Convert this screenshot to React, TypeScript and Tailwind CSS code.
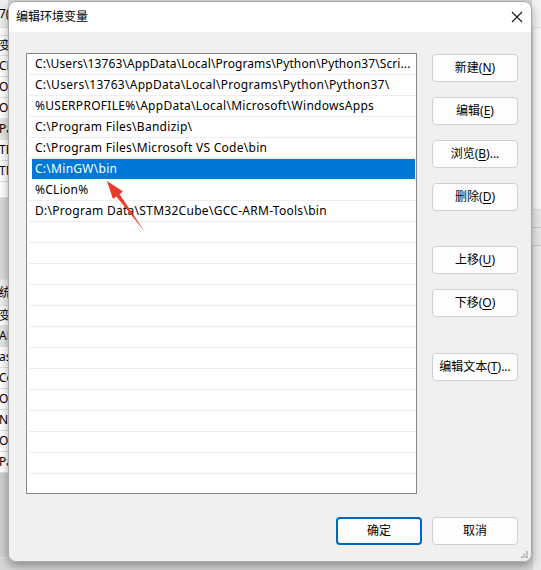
import React from 'react';

const paths = [
  'C:\\Users\\13763\\AppData\\Local\\Programs\\Python\\Python37\\Scri...',
  'C:\\Users\\13763\\AppData\\Local\\Programs\\Python\\Python37\\',
  '%USERPROFILE%\\AppData\\Local\\Microsoft\\WindowsApps',
  'C:\\Program Files\\Bandizip\\',
  'C:\\Program Files\\Microsoft VS Code\\bin',
  'C:\\MinGW\\bin',
  '%CLion%',
  'D:\\Program Data\\STM32Cube\\GCC-ARM-Tools\\bin',
];

const SELECTED = 5;
const EMPTY_ROWS = 13;

const uiFont = 'font-["Segoe_UI","Noto_Sans","Noto_Sans_CJK_SC",sans-serif]';

const leftBits = [
  { h: 28, t: '7(', bg: 'bg-[#eeeeee]' },
  { h: 8, t: '', bg: 'bg-white' },
  { h: 20, t: '变', bg: 'bg-white' },
  { h: 21, t: 'CL', bg: 'bg-white' },
  { h: 21, t: 'O', bg: 'bg-white' },
  { h: 21, t: 'O', bg: 'bg-white' },
  { h: 21, t: 'Pa', bg: 'bg-[#e5e5e5]' },
  { h: 21, t: 'TE', bg: 'bg-white' },
  { h: 21, t: 'TM', bg: 'bg-white' },
  { h: 16, t: '', bg: 'bg-white' },
  { h: 82, t: '', bg: 'bg-[#d9d9d9]' },
  { h: 26, t: '统', bg: 'bg-[#efefef]' },
  { h: 20, t: '变', bg: 'bg-white' },
  { h: 21, t: 'AD', bg: 'bg-[#e5e5e5]' },
  { h: 21, t: 'as', bg: 'bg-white' },
  { h: 21, t: 'Co', bg: 'bg-white' },
  { h: 21, t: 'Or', bg: 'bg-white' },
  { h: 21, t: 'N', bg: 'bg-white' },
  { h: 21, t: 'O', bg: 'bg-white' },
  { h: 21, t: 'Pa', bg: 'bg-white' },
  { h: 85, t: '', bg: 'bg-[#cfcfcf]' },
];

function Btn({ label, k, suffix = '' }: { label: string; k: string; suffix?: string }) {
  return (
    <div className="w-[86px] h-[28px] flex items-center justify-center rounded-[4px] bg-[#fdfdfd] border border-[#d0d0d0] text-[12px] text-black">
      {label}(<u className="underline-offset-2">{k}</u>){suffix}
    </div>
  );
}

function Arrow() {
  return (
    <svg className="absolute left-0 top-0 z-20 pointer-events-none" width="541" height="570" viewBox="0 0 541 570">
      <polygon
        points="107,181 113,199 116.4,196.6 145,232 119.6,194.2 123,191.5"
        fill="#ec3a2d"
      />
    </svg>
  );
}

export default function App() {
  return (
    <div className={`relative w-[541px] h-[570px] overflow-hidden bg-[#d6d6d6] flex ${uiFont}`}>
      {/* background window on the left */}
      <div className="w-[8px] flex flex-col overflow-hidden text-[12px] leading-none text-black">
        {leftBits.map((b, i) => (
          <div key={i} style={{ height: b.h }} className={`${b.bg} flex items-center whitespace-nowrap border-b border-[#e2e2e2]`}>
            <span className="-ml-[1px]">{b.t}</span>
          </div>
        ))}
      </div>

      {/* dialog */}
      <div className="mt-[1px] w-[524px] h-[561px] flex flex-col rounded-[8px] overflow-hidden border border-[#a8a8a8] shadow-[0_4px_10px_rgba(0,0,0,0.35)] z-10">
        <div className="h-[30px] bg-white flex items-center justify-between pl-[7px] pr-[8px]">
          <span className="text-[12px] text-black">编辑环境变量</span>
          <svg width="12" height="12" viewBox="0 0 12 12" className="mb-[1px]">
            <path d="M1 1 L11 11 M11 1 L1 11" stroke="#1a1a1a" strokeWidth="1.1" />
          </svg>
        </div>
        <div className="flex-1 bg-[#f0f0f0] relative">
          <div className="flex pl-[17px] pt-[21px] gap-[15px]">
            <div className="w-[391px] h-[441px] bg-white border border-[#828790] overflow-hidden">
              {paths.map((p, i) => (
                <div
                  key={p}
                  className={`h-[21px] border-b ml-[1px] ${i === SELECTED ? 'border-white' : 'border-[#eeeeee]'}`}
                >
                  <div
                    className={`h-[20px] flex items-center pl-[3px] ml-[4px] text-[12px] whitespace-nowrap ${
                      i === 0 ? 'tracking-[0.1px]' : 'tracking-[0.28px]'
                    } ${i === SELECTED ? 'bg-[#0078d7] text-white mr-[1px]' : 'text-black'}`}
                  >
                    {p}
                  </div>
                </div>
              ))}
              {Array.from({ length: EMPTY_ROWS }).map((_, i) => (
                <div key={i} className="h-[21px] border-b border-[#eeeeee] ml-[1px]" />
              ))}
            </div>
            <div className="flex flex-col pt-[1px]">
              <div className="flex flex-col gap-[15px]">
                <Btn label="新建" k="N" />
                <Btn label="编辑" k="E" />
                <Btn label="浏览" k="B" suffix="..." />
                <Btn label="删除" k="D" />
              </div>
              <div className="flex flex-col gap-[15px] mt-[35px]">
                <Btn label="上移" k="U" />
                <Btn label="下移" k="O" />
              </div>
              <div className="mt-[36px]">
                <Btn label="编辑文本" k="T" suffix="..." />
              </div>
            </div>
          </div>
          <div className="flex justify-end gap-[10px] pr-[13px] mt-[23px]">
            <div className="w-[86px] h-[28px] flex items-center justify-center rounded-[4px] bg-[#fdfdfd] border-2 border-[#0067c0] text-[12px] text-black">
              确定
            </div>
            <div className="w-[86px] h-[28px] flex items-center justify-center rounded-[4px] bg-[#fdfdfd] border border-[#d0d0d0] text-[12px] text-black">
              取消
            </div>
          </div>
          <svg className="absolute right-[3px] bottom-[3px]" width="7" height="7" viewBox="0 0 7 7">
            <rect x="5" y="0" width="2" height="2" fill="#b5b5b5" />
            <rect x="2.5" y="2.5" width="2" height="2" fill="#b5b5b5" />
            <rect x="5" y="2.5" width="2" height="2" fill="#b5b5b5" />
            <rect x="0" y="5" width="2" height="2" fill="#b5b5b5" />
            <rect x="2.5" y="5" width="2" height="2" fill="#b5b5b5" />
            <rect x="5" y="5" width="2" height="2" fill="#b5b5b5" />
          </svg>
        </div>
      </div>

      {/* background window on the right */}
      <div className="flex-1 flex flex-col">
        <div className="h-[28px] bg-[#f3f3f3] border-b border-[#e0e0e0]" />
        <div className="h-[182px] bg-[#f7f7f7] border-l border-[#dcdcdc] border-b border-[#9a9a9a]" />
        <div className="h-[18px] bg-[#e6e6e6] border-b border-[#c8c8c8]" />
        <div className="h-[18px] bg-[#e6e6e6] border-b border-[#c8c8c8]" />
        <div className="flex-1 bg-[#e9e9e9] border-l border-[#d5d5d5]" />
      </div>

      <Arrow />
    </div>
  );
}
